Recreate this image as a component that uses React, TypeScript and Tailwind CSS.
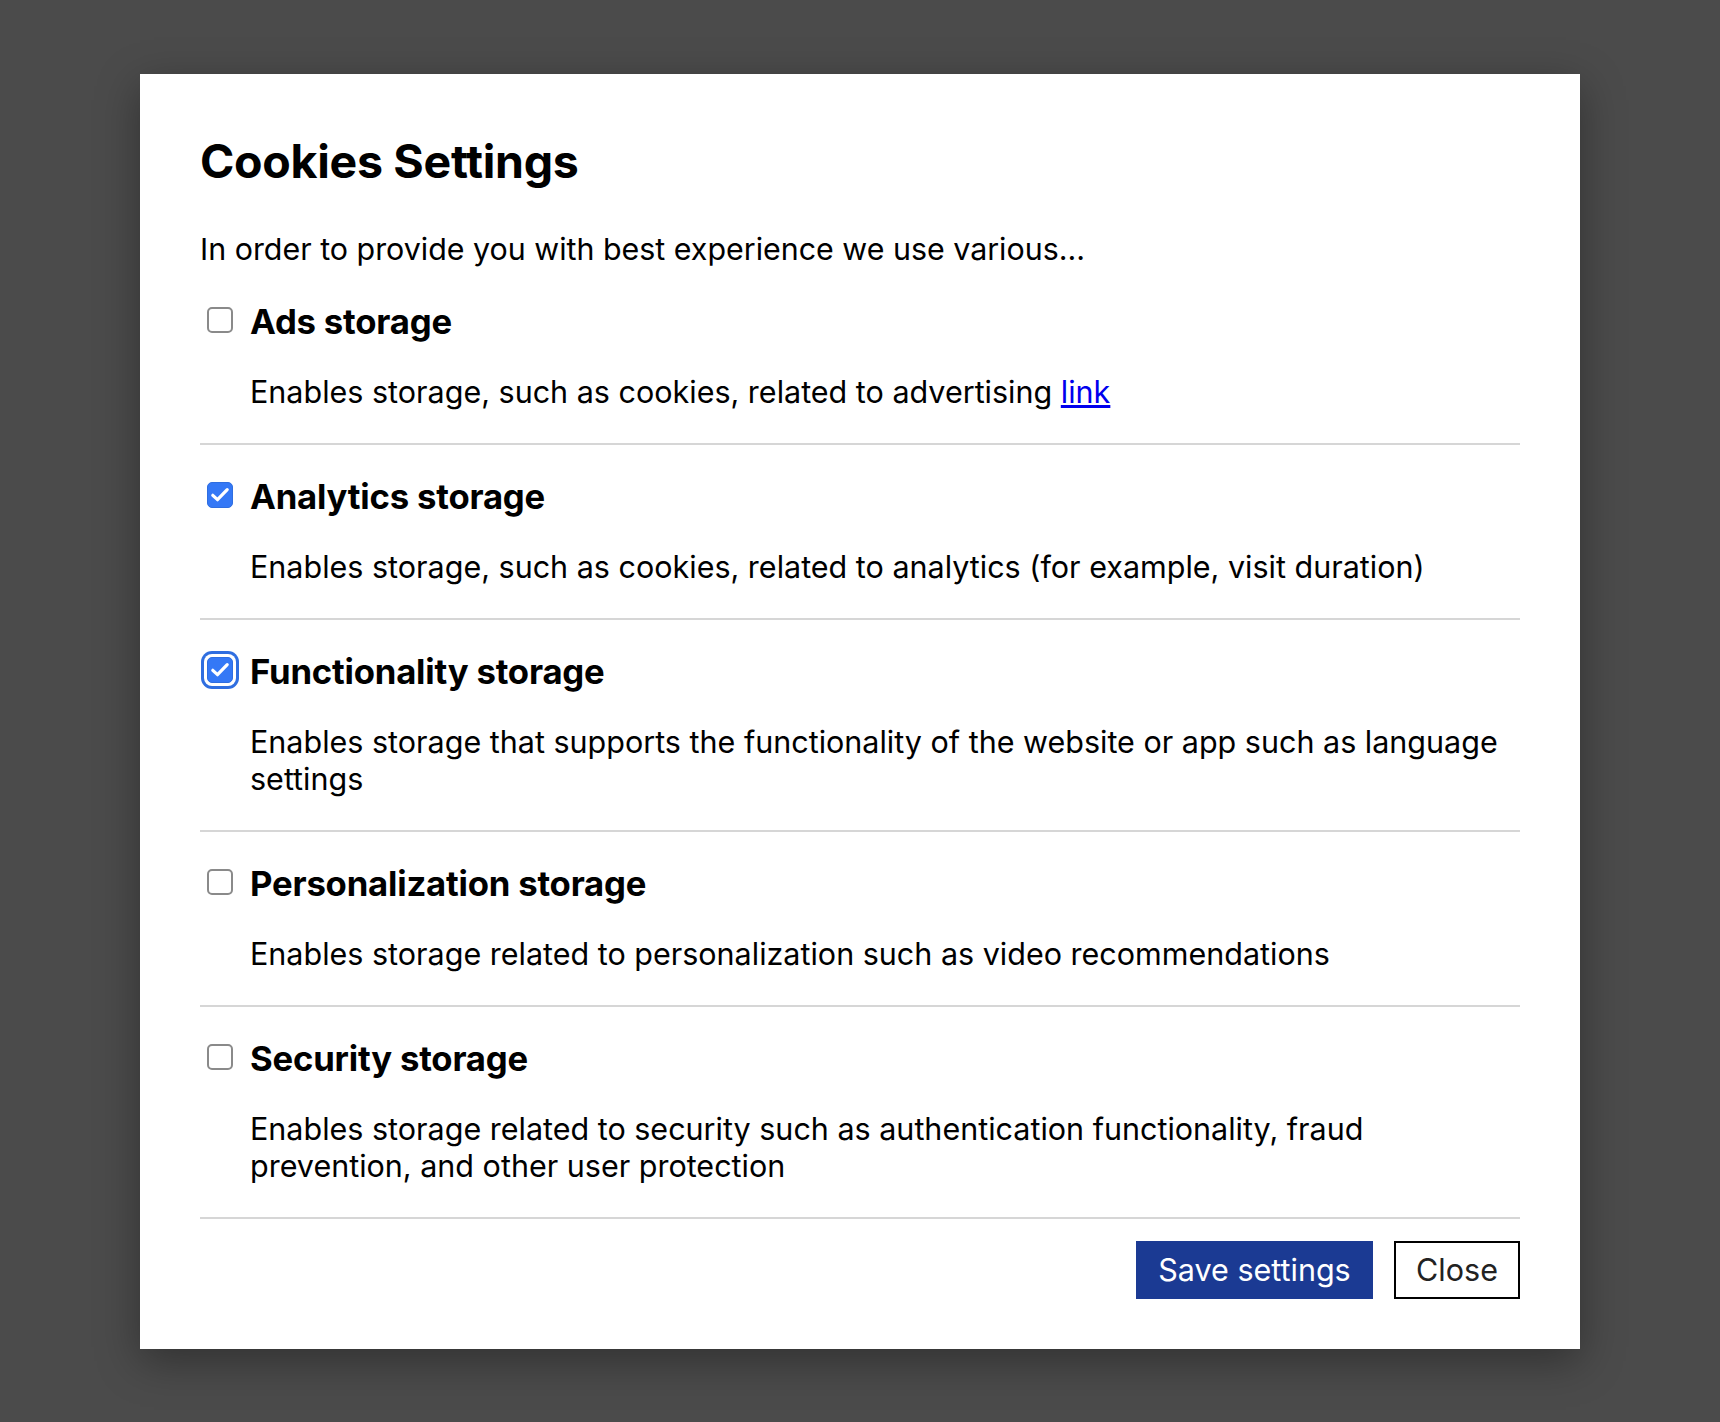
import React, { useState } from 'react';

type Item = {
  id: string;
  title: string;
  desc: React.ReactNode;
};

const items: Item[] = [
  {
    id: 'ads',
    title: 'Ads storage',
    desc: (
      <>
        Enables storage, such as cookies, related to advertising{' '}
        <a href="#link" className="text-[#0000ee] underline">
          link
        </a>
      </>
    ),
  },
  {
    id: 'analytics',
    title: 'Analytics storage',
    desc: 'Enables storage, such as cookies, related to analytics (for example, visit duration)',
  },
  {
    id: 'functionality',
    title: 'Functionality storage',
    desc: (
      <>
        Enables storage that supports the functionality of the website or app such as language
        <br />
        settings
      </>
    ),
  },
  {
    id: 'personalization',
    title: 'Personalization storage',
    desc: 'Enables storage related to personalization such as video recommendations',
  },
  {
    id: 'security',
    title: 'Security storage',
    desc: (
      <>
        Enables storage related to security such as authentication functionality, fraud
        <br />
        prevention, and other user protection
      </>
    ),
  },
];

const Checkbox: React.FC<{ checked: boolean; focused?: boolean; onChange: () => void }> = ({
  checked,
  focused,
  onChange,
}) => (
  <button
    type="button"
    role="checkbox"
    aria-checked={checked}
    onClick={onChange}
    className={
      'flex h-[26px] w-[26px] shrink-0 items-center justify-center rounded-[5px] ' +
      (checked ? 'bg-[#3478f6] border border-[#2f6ee0] ' : 'bg-white border-2 border-[#8a8a8a] ') +
      (focused ? 'ring-3 ring-[#2f6ee0] ring-offset-[3px] ring-offset-white' : '')
    }
  >
    {checked && (
      <svg viewBox="0 0 24 24" className="h-full w-full" fill="none">
        <path d="M4.8 12.3l4.7 4.4L19.2 6.6" stroke="white" strokeWidth="3.2" strokeLinecap="round" strokeLinejoin="round" />
      </svg>
    )}
  </button>
);

export default function App() {
  const [checked, setChecked] = useState<Record<string, boolean>>({
    ads: false,
    analytics: true,
    functionality: true,
    personalization: false,
    security: false,
  });

  const toggle = (id: string) => setChecked((c) => ({ ...c, [id]: !c[id] }));

  return (
    <div
      className="min-h-screen flex items-center justify-center bg-[#4b4b4b]"
      style={{ fontFamily: 'Inter, "Noto Sans", "Liberation Sans", sans-serif' }}
    >
      <div className="w-[1440px] bg-white px-[60px] pt-[60px] pb-[50px] shadow-[0_12px_40px_rgba(0,0,0,0.35)] text-black">
        <h2 className="text-[46.5px] leading-[54px] font-bold tracking-[-0.3px]">Cookies Settings</h2>
        <p className="mt-[43px] mb-[2px] text-[30.4px] leading-[37px]">
          In order to provide you with best experience we use various...
        </p>

        {items.map((item) => (
          <div key={item.id} className="pt-[33px] pb-[33px] border-b-2 border-[#d6d6d6]">
            <label className="flex h-[37px] items-center">
              <span className="ml-[7px] mr-[17px] flex -translate-y-[1px]">
                <Checkbox
                  checked={checked[item.id]}
                  focused={item.id === 'functionality'}
                  onChange={() => toggle(item.id)}
                />
              </span>
              <span className="text-[34.7px] leading-[37px] font-bold tracking-[-0.2px]">{item.title}</span>
            </label>
            <p className="mt-[33px] pl-[50px] text-[30.5px] leading-[37px] whitespace-nowrap">{item.desc}</p>
          </div>
        ))}

        <div className="mt-[22px] flex justify-end gap-[21px]">
          <button
            type="button"
            className="h-[58px] w-[237px] bg-[#1b3a93] text-white text-[30.5px] border-2 border-[#1b3a93]"
          >
            Save settings
          </button>
          <button
            type="button"
            className="h-[58px] w-[126px] bg-white text-[#222] text-[30.5px] border-2 border-black"
          >
            Close
          </button>
        </div>
      </div>
    </div>
  );
}
